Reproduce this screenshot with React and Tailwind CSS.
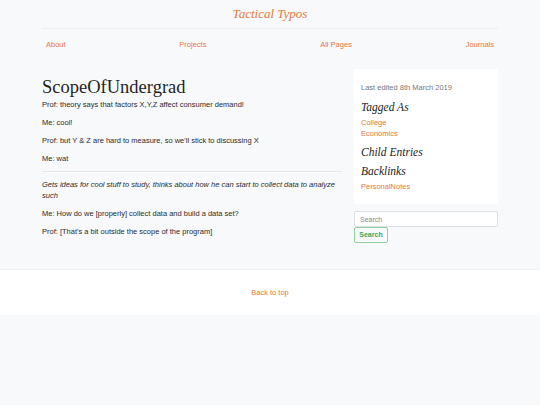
import React from 'react';

const navLinks = ['About', 'Projects', 'All Pages', 'Journals'];

const paragraphs = [
  { text: 'Prof: theory says that factors X,Y,Z affect consumer demand!' },
  { text: 'Me: cool!' },
  { text: "Prof: but Y & Z are hard to measure, so we'll stick to discussing X" },
  { text: 'Me: wat' },
];

const afterRule = [
  { text: 'Gets ideas for cool stuff to study, thinks about how he can start to collect data to analyze such', italic: true },
  { text: 'Me: How do we [properly] collect data and build a data set?' },
  { text: "Prof: [That's a bit outside the scope of the program]" },
];

const sans = "font-['Liberation_Sans',Arial,sans-serif]";
const serif = "font-['Liberation_Serif',Georgia,serif]";

const Para = ({ text, italic }) => (
  <p className={`text-[7.5px] leading-[11px] mb-[7px] text-[#2b2b2b] ${italic ? 'italic' : ''}`}>{text}</p>
);

const App = () => {
  return (
    <div className={`min-h-[405px] bg-[#f8f9fb] ${sans}`}>
      {/* Header */}
      <header className="w-[456px] mx-auto pt-[5px]">
        <h1 className={`${serif} italic text-[13px] leading-[18px] text-center text-[#e8773a]`}>Tactical Typos</h1>
        <div className="h-px bg-[#eceef1] mt-[5px]" />
        <nav className="flex justify-between px-[4px] pt-[11px]">
          {navLinks.map((link) => (
            <a key={link} href="#" className="text-[7.5px] leading-[10px] text-[#e8773a]">
              {link}
            </a>
          ))}
        </nav>
      </header>

      {/* Content */}
      <main className="w-[456px] mx-auto flex gap-[12px] pt-[19px]">
        <article className="w-[300px]">
          <h2 className={`${serif} text-[18.5px] leading-[22px] text-[#1f1f1f] mt-[7px]`}>ScopeOfUndergrad</h2>
          <div className="mt-[1px]">
            {paragraphs.map((p, i) => (
              <Para key={i} {...p} />
            ))}
          </div>
          <hr className="border-0 h-px bg-[#e6e8eb] mt-0 mb-[7px]" />
          {afterRule.map((p, i) => (
            <Para key={i} {...p} />
          ))}
        </article>

        <aside className="w-[144px]">
          <div className="bg-white px-[7px] pt-[14px] pb-[12px]">
            <p className="text-[7.5px] leading-[10px] text-[#777]">Last edited 8th March 2019</p>
            <h3 className={`${serif} italic text-[11.5px] leading-[14px] text-[#222] mt-[7px]`}>Tagged As</h3>
            <a href="#" className="block text-[7.5px] leading-[11px] text-[#e8773a] mt-[3px]">College</a>
            <a href="#" className="block text-[7.5px] leading-[11px] text-[#e8773a]">Economics</a>
            <h3 className={`${serif} italic text-[11.5px] leading-[14px] text-[#222] mt-[6px]`}>Child Entries</h3>
            <h3 className={`${serif} italic text-[11.5px] leading-[14px] text-[#222] mt-[5px]`}>Backlinks</h3>
            <a href="#" className="block text-[7.5px] leading-[11px] text-[#e8773a] mt-[3px]">PersonalNotes</a>
          </div>
          <input
            type="text"
            placeholder="Search"
            className="mt-[7px] block w-full h-[16px] px-[5px] bg-white border border-[#dcdfe3] rounded-[2px] text-[7px] placeholder-[#888] outline-none"
          />
          <button className="block h-[16px] w-[34px] border border-[#8fd19e] rounded-[2px] text-[7px] font-bold text-[#3aa45a] bg-transparent">
            Search
          </button>
        </aside>
      </main>

      {/* Footer */}
      <footer className="mt-[25px] bg-white border-t border-[#eef0f2] h-[46px] flex items-center justify-center">
        <a href="#" className="text-[7.5px] text-[#e8773a]">Back to top</a>
      </footer>
    </div>
  );
};

export default App;
